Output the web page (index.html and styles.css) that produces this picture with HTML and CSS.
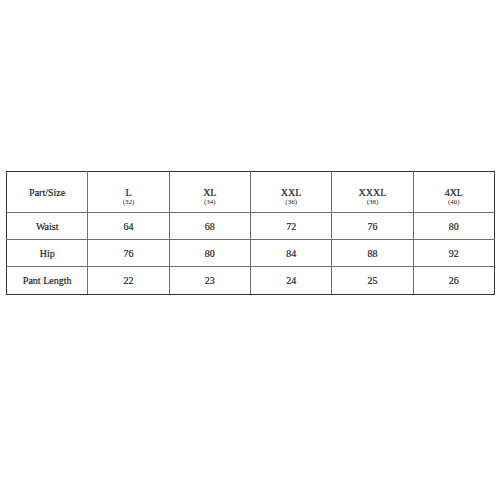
FILE: index.html
```html
<!DOCTYPE html>
<html>
<head>
<meta charset="utf-8">
<link rel="stylesheet" href="styles.css">
</head>
<body>
<table class="size-table">
  <tr class="head">
    <td>Part/Size</td>
    <td><span class="sz">L</span><span class="sub">(32)</span></td>
    <td><span class="sz">XL</span><span class="sub">(34)</span></td>
    <td><span class="sz">XXL</span><span class="sub">(36)</span></td>
    <td><span class="sz">XXXL</span><span class="sub">(38)</span></td>
    <td><span class="sz">4XL</span><span class="sub">(40)</span></td>
  </tr>
  <tr class="row">
    <td>Waist</td><td>64</td><td>68</td><td>72</td><td>76</td><td>80</td>
  </tr>
  <tr class="row">
    <td>Hip</td><td>76</td><td>80</td><td>84</td><td>88</td><td>92</td>
  </tr>
  <tr class="row last">
    <td>Pant Length</td><td>22</td><td>23</td><td>24</td><td>25</td><td>26</td>
  </tr>
</table>
</body>
</html>
```
FILE: styles.css
```css
html, body {
  margin: 0;
  padding: 0;
  background: #fff;
}
body {
  padding-top: 171px;
  padding-left: 6px;
}
.size-table {
  width: 489px;
  border-collapse: collapse;
  table-layout: fixed;
  border: 1px solid #333;
  font-family: "Liberation Serif", "Times New Roman", serif;
  font-size: 10px;
  color: #1e1e1e;
}
.size-table td {
  border: 1px solid #6f6f6f;
  text-align: center;
  vertical-align: middle;
  padding: 0;
  line-height: 11px;
  -webkit-text-stroke: 0.2px #1e1e1e;
}
.size-table tr.head td {
  height: 40px;
  border-top: 1px solid #333;
}
.size-table tr.row td {
  height: 26px;
}
.size-table tr.last td {
  height: 27px;
  border-bottom: 1px solid #333;
}
.size-table td:first-child { border-left: 1px solid #333; }
.size-table td:last-child { border-right: 1px solid #333; }
.sz {
  display: block;
  padding-top: 10px;
}
.sub {
  display: block;
  font-size: 7px;
  line-height: 9px;
  -webkit-text-stroke: 0;
}
```
